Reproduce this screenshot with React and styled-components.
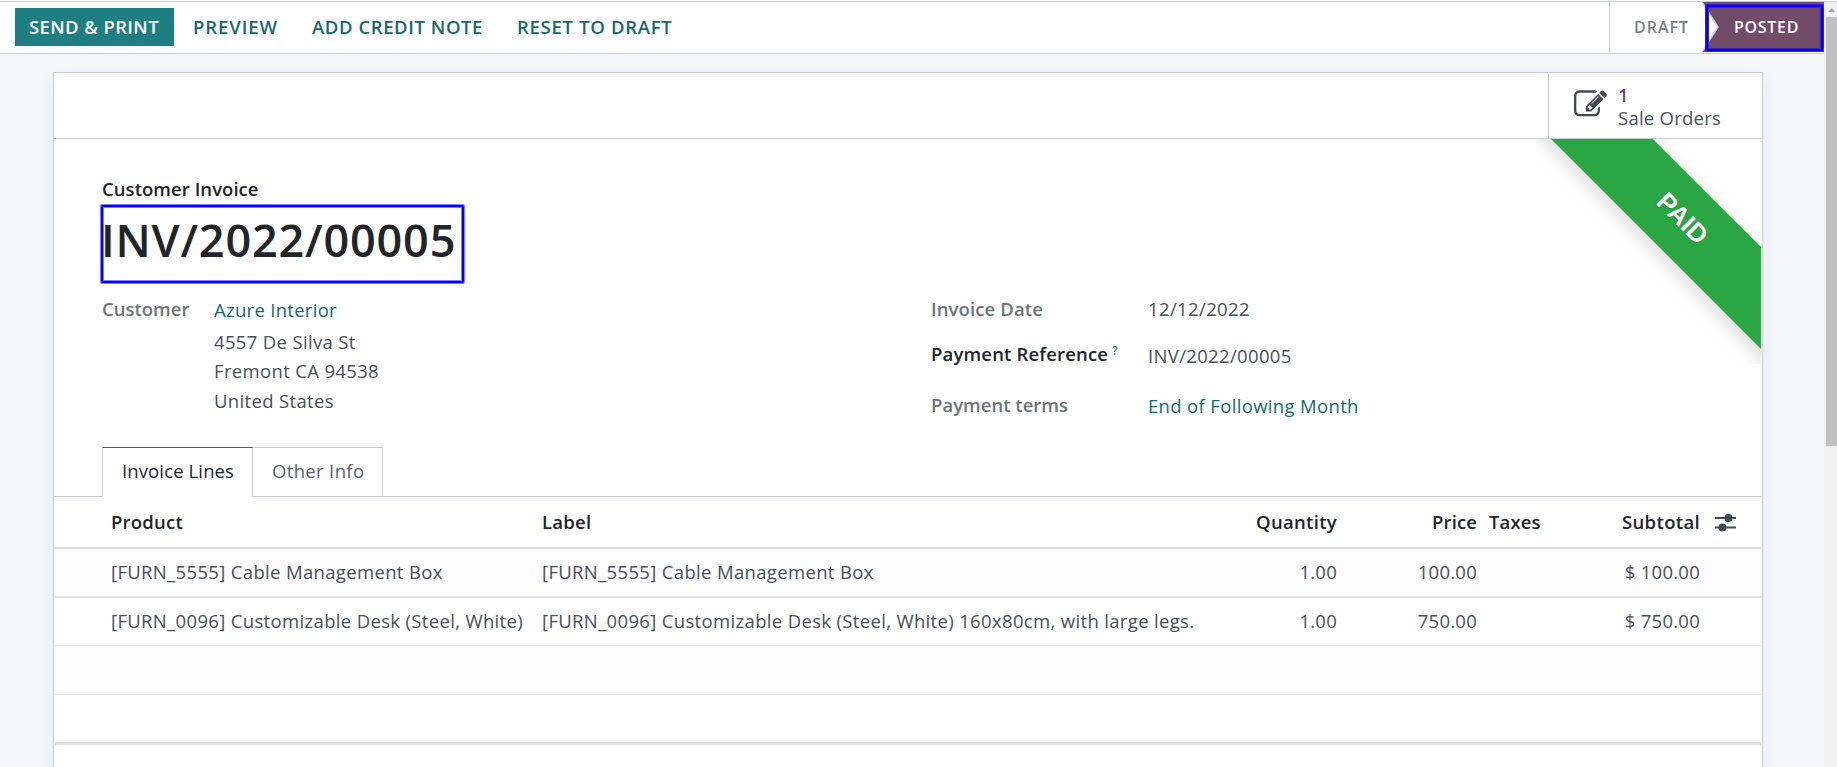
import React from "react";
import styled, { createGlobalStyle } from "styled-components";

const GlobalStyle = createGlobalStyle`
  * { box-sizing: border-box; }
  html, body { margin: 0; height: 100%; overflow: hidden; }
  body {
    font-family: "Open Sans", "Noto Sans", sans-serif;
    font-size: 18.5px;
    line-height: 25px;
    color: #4a4f59;
    background: #f5f6fa;
    white-space: nowrap;
  }
`;

const line = "#c9ccd2";
const softLine = "#e0e1e6";
const teal = "#17696b";
const plum = "#714b67";
const ink = "#212529";

const Page = styled.div`
  height: 767px;
  display: flex;
  flex-direction: column;
  overflow: hidden;
  border-top: 1px solid #fff;
`;

const Main = styled.div`
  flex: 1;
  min-height: 0;
  display: flex;
  border-top: 1px solid ${line};
`;

const Content = styled.div`
  flex: 1;
  min-width: 0;
  overflow: hidden;
`;

const Text = styled.span`
  letter-spacing: ${(p) => p.$ls ?? 0.34}px;
`;

/* ---- Action bar ---- */

const ActionBar = styled.header`
  height: 52px;
  display: flex;
  justify-content: space-between;
  background: #fff;
  border-bottom: 1px solid ${line};
`;

const Actions = styled.div`
  display: flex;
  align-items: flex-start;
  padding: 6px 0 0 15px;
`;

const ActionButton = styled.button`
  height: 38px;
  width: ${(p) => p.$width}px;
  padding: 6px 0 7px ${(p) => (p.$primary ? 14 : 19)}px;
  border: 0;
  font: inherit;
  font-weight: 600;
  text-align: left;
  color: ${(p) => (p.$primary ? "#fff" : teal)};
  background: ${(p) => (p.$primary ? "#1e7f83" : "transparent")};
`;

const StatusBar = styled.div`
  display: flex;
  height: 50px;
  border-left: 1px solid ${line};
  font-size: 16px;
  font-weight: 600;
  line-height: 22px;
`;

const Status = styled.div`
  width: 92px;
  padding: 14px 0 0 24px;
  color: #7a7f87;
`;

const CurrentStatus = styled.div`
  position: relative;
  width: 122px;
  padding: 14px 0 0 32px;
  color: #fff;
`;

const StatusShape = styled.svg`
  position: absolute;
  inset: 0;
`;

const StatusLabel = styled.span`
  position: relative;
  letter-spacing: 0.7px;
`;

const StatusHighlight = styled.div`
  position: absolute;
  left: 4px;
  top: 3px;
  width: 117px;
  height: 46px;
  border: 2px solid #0000ff;
  border-radius: 1px;
  box-shadow: 0 0 0 1px #3a1ddc, inset 0 0 0 1px #3a26b3;
`;

/* ---- Sheet ---- */

const Sheet = styled.section`
  position: relative;
  width: 1710px;
  height: 740px;
  margin: 18px 0 0 53px;
  padding-right: 1px;
  background: #fff;
  border: 1px solid ${line};
  box-shadow: 0 8px 18px rgba(40, 45, 70, 0.05);
`;

const StatBar = styled.div`
  height: 66px;
  display: flex;
  justify-content: flex-end;
  border-bottom: 1px solid ${line};
`;

const StatButton = styled.div`
  width: 213px;
  display: flex;
  border-left: 1px solid ${line};
  padding: 10px 0 0 25px;
  gap: 11px;
`;

const StatIcon = styled.svg`
  width: 33px;
  height: 33px;
  margin-top: 5px;
  fill: #434852;
`;

const StatText = styled.div`
  display: flex;
  flex-direction: column;
  line-height: 23px;
`;

const StatValue = styled.span`
  color: ${plum};
  font-weight: 600;
`;

const RibbonClip = styled.div`
  position: absolute;
  top: 66px;
  right: 1px;
  width: 225px;
  height: 225px;
  overflow: hidden;
`;

const Ribbon = styled.div`
  position: absolute;
  left: -34.5px;
  top: 44px;
  width: 360px;
  height: 72px;
  transform: rotate(45deg);
  background: #2ba645;
  box-shadow: 0 5px 20px rgba(0, 0, 0, 0.16);
  color: #fff;
  font: bold 26px/71px "Liberation Sans", Arial, sans-serif;
  text-align: center;
  text-shadow: 0 1px 1px rgba(0, 0, 0, 0.2);
`;

const Heading = styled.div`
  padding: 37px 0 0 47px;
`;

const Kind = styled.div`
  padding-left: 1px;
  height: 28px;
  font-weight: 600;
  color: ${ink};
`;

const Title = styled.h1`
  margin: 1px 0 0;
  width: 363px;
  height: 78px;
  padding-top: 2px;
  border: 2px solid #0000ff;
  border-radius: 1px;
  box-shadow: 0 0 0 1px #8080ff, inset 0 0 0 1px #8080ff;
  font-size: 45px;
  font-weight: 600;
  line-height: 61px;
  text-indent: -2px;
  color: ${ink};
`;

const Groups = styled.div`
  display: grid;
  grid-template-columns: 829px 1fr;
  height: 164px;
  padding: 13px 0 0 48px;
`;

const Field = styled.div`
  display: grid;
  grid-template-columns: ${(p) => p.$label}px 1fr;
  height: ${(p) => p.$height || 25}px;
`;

const Label = styled.div`
  padding-top: ${(p) => p.$drop || 0}px;
  font-weight: 600;
  color: ${(p) => (p.$dark ? ink : "#70737a")};
`;

const Value = styled.div`
  padding-top: ${(p) => p.$drop || 0}px;
`;

const Link = styled.div`
  height: 29.6px;
  color: ${teal};
`;

const AddressLine = styled.div`
  line-height: 29.5px;
`;

const Help = styled.sup`
  margin-left: 4px;
  font-size: 12px;
  line-height: 0;
  vertical-align: 6px;
  color: #1e7f83;
`;

/* ---- Tabs ---- */

const Tabs = styled.nav`
  height: 50px;
  display: flex;
  padding-left: 48px;
  border-bottom: 1px solid ${line};
`;

const Tab = styled.div`
  width: ${(p) => p.$width}px;
  height: 50px;
  padding: 10px 0 0 19px;
  border: 1px solid ${line};
  border-left-width: ${(p) => (p.$active ? 1 : 0)}px;
  border-top-color: ${(p) => (p.$active ? plum : line)};
  border-bottom-color: ${(p) => (p.$active ? "#fff" : line)};
  color: ${(p) => (p.$active ? ink : "#5c616b")};
  background: #fff;
`;

/* ---- Lines ---- */

const Row = styled.div`
  display: grid;
  grid-template-columns: 431px 659px 136px 140px 103px 120px 1fr;
  margin-left: ${(p) => (p.$head ? 0 : 1)}px;
  padding: ${(p) => (p.$head ? "12px 0 0 57px" : "10px 0 0 56px")};
  height: ${(p) => p.$height}px;
  border-bottom: ${(p) => p.$rule}px solid ${softLine};
  background: ${(p) => (p.$striped ? "#fcfcfc" : "#fff")};
  color: ${(p) => (p.$head ? ink : "inherit")};
  font-weight: ${(p) => (p.$head ? 600 : 400)};
`;

const Cell = styled.div`
  text-align: ${(p) => (p.$num ? "right" : "left")};
  padding-left: ${(p) => p.$pad || 0}px;
`;

const OptionsIcon = styled.svg`
  display: block;
  width: 21px;
  height: 20px;
  margin-top: 3px;
`;

/* ---- Scrollbar ---- */

const Scrollbar = styled.div`
  width: 13px;
  background: #f1f1f1;
  display: flex;
  flex-direction: column;
  align-items: flex-end;
`;

const ScrollArrow = styled.svg`
  width: 11px;
  height: 15px;
`;

const ScrollThumb = styled.div`
  width: 11px;
  height: 429px;
  background: #c1c1c1;
`;

const lines = [
  {
    product: "[FURN_5555] Cable Management Box",
    label: "[FURN_5555] Cable Management Box",
    quantity: "1.00",
    price: "100.00",
    subtotal: "$ 100.00",
    height: 49,
    rule: 2,
  },
  {
    product: "[FURN_0096] Customizable Desk (Steel, White)",
    label: "[FURN_0096] Customizable Desk (Steel, White) 160x80cm, with large legs.",
    quantity: "1.00",
    price: "750.00",
    subtotal: "$ 750.00",
    height: 48,
    rule: 1,
  },
];

export default function App() {
  return (
    <Page>
      <GlobalStyle />
      <Main>
        <Content>
          <ActionBar>
            <Actions>
              <ActionButton $primary $width={159}><Text $ls={0.37}>SEND &amp; PRINT</Text></ActionButton>
              <ActionButton $width={119}><Text $ls={0.93}>PREVIEW</Text></ActionButton>
              <ActionButton $width={205}><Text $ls={0.58}>ADD CREDIT NOTE</Text></ActionButton>
              <ActionButton $width={190}><Text $ls={0.7}>RESET TO DRAFT</Text></ActionButton>
            </Actions>
            <StatusBar>
              <Status><Text $ls={1}>DRAFT</Text></Status>
              <CurrentStatus>
                <StatusShape width="122" height="50" viewBox="0 0 122 50">
                  <path d="M0 0H122V50H0L16 25Z" fill={plum} />
                  <path d="M0 0L16 25L0 50" fill="none" stroke="#c9ccd2" strokeWidth="1.5" />
                </StatusShape>
                <StatusLabel>POSTED</StatusLabel>
                <StatusHighlight />
              </CurrentStatus>
            </StatusBar>
          </ActionBar>

          <Sheet>
            <StatBar>
              <StatButton>
                <StatIcon viewBox="0 0 1792 1792">
                  <path d="M888 1184l116-116-152-152-116 116v56h96v96h56zm440-720q-16-16-33 1l-350 350q-17 17-1 33t33-1l350-350q17-17 1-33zm80 594v190q0 119-84.5 203.5t-203.5 84.5h-832q-119 0-203.5-84.5t-84.5-203.5v-832q0-119 84.5-203.5t203.5-84.5h832q63 0 117 25 15 7 18 23 3 17-9 29l-49 49q-14 14-32 8-23-6-45-6h-832q-66 0-113 47t-47 113v832q0 66 47 113t113 47h832q66 0 113-47t47-113v-126q0-13 9-22l64-64q15-15 35-7t20 29zm-96-738l288 288-672 672h-288v-288zm444 132l-92 92-288-288 92-92q28-28 68-28t68 28l152 152q28 28 28 68t-28 68z" />
                </StatIcon>
                <StatText>
                  <StatValue>1</StatValue>
                  <Text $ls={0.25}>Sale Orders</Text>
                </StatText>
              </StatButton>
            </StatBar>
            <RibbonClip><Ribbon>PAID</Ribbon></RibbonClip>

            <Heading>
              <Kind><Text $ls={0.05}>Customer Invoice</Text></Kind>
              <Title><Text $ls={0.82}>INV/2022/00005</Text></Title>
            </Heading>

            <Groups>
              <Field $label={112}>
                <Label><Text $ls={0}>Customer</Text></Label>
                <Value $drop={1}>
                  <Link><Text $ls={0.29}>Azure Interior</Text></Link>
                  <AddressLine><Text>4557 De Silva St</Text></AddressLine>
                  <AddressLine><Text>Fremont CA 94538</Text></AddressLine>
                  <AddressLine><Text>United States</Text></AddressLine>
                </Value>
              </Field>
              <div>
                <Field $label={217} $height={44}>
                  <Label><Text $ls={0.11}>Invoice Date</Text></Label>
                  <Value><Text $ls={0.38}>12/12/2022</Text></Value>
                </Field>
                <Field $label={217} $height={52}>
                  <Label $dark $drop={1}><Text $ls={0.17}>Payment Reference</Text><Help>?</Help></Label>
                  <Value $drop={3}><Text>INV/2022/00005</Text></Value>
                </Field>
                <Field $label={217}>
                  <Label><Text $ls={0.02}>Payment terms</Text></Label>
                  <Value $drop={1}><Link><Text>End of Following Month</Text></Link></Value>
                </Field>
              </div>
            </Groups>

            <Tabs>
              <Tab $active $width={151}><Text $ls={0.12}>Invoice Lines</Text></Tab>
              <Tab $width={130}><Text>Other Info</Text></Tab>
            </Tabs>

            <Row $head $height={52} $rule={2}>
              <Cell><Text $ls={0.22}>Product</Text></Cell>
              <Cell><Text $ls={0.27}>Label</Text></Cell>
              <Cell $num><Text $ls={0.3}>Quantity</Text></Cell>
              <Cell $num><Text $ls={0.12}>Price</Text></Cell>
              <Cell $pad={12}><Text $ls={0.1}>Taxes</Text></Cell>
              <Cell $num><Text $ls={0.34}>Subtotal</Text></Cell>
              <Cell $pad={15}>
                <OptionsIcon viewBox="0 0 21 20">
                  <path d="M0 6H21M0 15.5H21" stroke="#434852" strokeWidth="1.8" />
                  <circle cx="13.5" cy="6" r="4" fill="#434852" />
                  <circle cx="7.5" cy="15.5" r="4" fill="#434852" />
                </OptionsIcon>
              </Cell>
            </Row>
            {lines.map((l, i) => (
              <Row key={l.product} $striped={i % 2 === 0} $height={l.height} $rule={l.rule}>
                <Cell><Text>{l.product}</Text></Cell>
                <Cell><Text>{l.label}</Text></Cell>
                <Cell $num><Text $ls={0.25}>{l.quantity}</Text></Cell>
                <Cell $num><Text $ls={0.25}>{l.price}</Text></Cell>
                <Cell />
                <Cell $num><Text $ls={0.25}>{l.subtotal}</Text></Cell>
              </Row>
            ))}
            <Row $striped $height={49} $rule={1} />
            <Row $height={50} $rule={3} />
          </Sheet>
        </Content>
        <Scrollbar>
          <ScrollArrow viewBox="0 0 11 15">
            <path d="M2 10L5.5 6L9 10Z" fill="#a3a3a3" />
          </ScrollArrow>
          <ScrollThumb />
        </Scrollbar>
      </Main>
    </Page>
  );
}
